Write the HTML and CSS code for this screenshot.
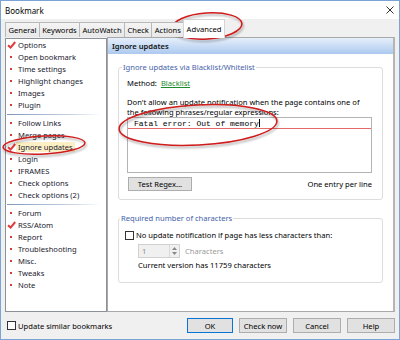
FILE: index.html
```html
<!DOCTYPE html>
<html lang="en">
<head>
    <meta charset="UTF-8">
    <title>Bookmark</title>
    <link rel="stylesheet" href="styles.css">
</head>
<body>
    <div class="window">
        <div class="titlebar">
            <span>Bookmark</span>
            <svg class="close" width="8" height="8" viewBox="0 0 8 8"><path d="M0.5 0.5 L7.5 7.5 M7.5 0.5 L0.5 7.5" stroke="#333" stroke-width="1"/></svg>
        </div>

        <div class="tabs">
            <div class="tab">General</div>
            <div class="tab">Keywords</div>
            <div class="tab">AutoWatch</div>
            <div class="tab">Check</div>
            <div class="tab">Actions</div>
            <div class="tab active">Advanced</div>
        </div>

        <div class="page">
            <ul class="nav">
                <li class="checked">Options</li>
                <li>Open bookmark</li>
                <li>Time settings</li>
                <li>Highlight changes</li>
                <li>Images</li>
                <li>Plugin</li>
                <li class="sep"></li>
                <li>Follow Links</li>
                <li>Merge pages</li>
                <li class="checked selected"><span>Ignore updates</span></li>
                <li>Login</li>
                <li>IFRAMES</li>
                <li>Check options</li>
                <li>Check options (2)</li>
                <li class="sep"></li>
                <li>Forum</li>
                <li class="checked">RSS/Atom</li>
                <li>Report</li>
                <li>Troubleshooting</li>
                <li>Misc.</li>
                <li>Tweaks</li>
                <li>Note</li>
            </ul>

            <div class="content">
                <div class="header">Ignore updates</div>

                <fieldset class="group">
                    <legend>Ignore updates via Blacklist/Whitelist</legend>
                    <div class="method">Method: <a class="link">Blacklist</a></div>
                    <p class="desc">Don't allow an update notification when the page contains one of the following phrases/regular expressions:</p>
                    <div class="textarea">
                        <div class="line">Fatal error: Out of memory<span class="caret"></span></div>
                    </div>
                    <div class="row">
                        <button class="btn small">Test Regex...</button>
                        <span>One entry per line</span>
                    </div>
                </fieldset>

                <fieldset class="group second">
                    <legend>Required number of characters</legend>
                    <label class="check"><span class="box"></span>No update notification if page has less characters than:</label>
                    <div class="spin-row">
                        <div class="spin">
                            <span>1</span>
                            <div class="arrows">
                                <svg width="5" height="3" viewBox="0 0 5 3"><path d="M0 3 L2.5 0 L5 3Z" fill="#888"/></svg>
                                <svg width="5" height="3" viewBox="0 0 5 3"><path d="M0 0 L2.5 3 L5 0Z" fill="#888"/></svg>
                            </div>
                        </div>
                        <span class="muted">Characters</span>
                    </div>
                    <div class="current">Current version has 11759 characters</div>
                </fieldset>
            </div>
        </div>

        <div class="footer">
            <label class="check"><span class="box"></span>Update similar bookmarks</label>
            <div class="buttons">
                <button class="btn default">OK</button>
                <button class="btn">Check now</button>
                <button class="btn">Cancel</button>
                <button class="btn">Help</button>
            </div>
        </div>

        <!-- red annotation rings drawn over the dialog -->
        <svg class="marks" width="400" height="340" viewBox="0 0 400 340">
            <defs>
                <filter id="shadow" x="-20%" y="-50%" width="140%" height="200%">
                    <feDropShadow dx="1" dy="2" stdDeviation="1.2" flood-color="#000" flood-opacity="0.35"/>
                </filter>
            </defs>
            <g fill="none" stroke="#cf1a1a" stroke-width="1.5" filter="url(#shadow)">
                <ellipse cx="207" cy="26" rx="35" ry="13" transform="rotate(-4 207 26)"/>
                <ellipse cx="44" cy="145" rx="41" ry="9" transform="rotate(-3 44 145)"/>
                <ellipse cx="198" cy="125" rx="79" ry="20" transform="rotate(-3 198 125)"/>
            </g>
        </svg>
    </div>
</body>
</html>
```

FILE: styles.css
```css
* {
    box-sizing: border-box;
}
body {
    margin: 0;
    font-family: "Noto Sans", "Open Sans", sans-serif;
    font-size: 7.6px;
    color: #000;
}
.window {
    position: relative;
    width: 400px;
    height: 340px;
    border: 1px solid #7aa4d6;
    background: #f0f0f0;
    display: flex;
    flex-direction: column;
}
.titlebar {
    height: 18px;
    background: #fff;
    display: flex;
    align-items: center;
    justify-content: space-between;
    padding: 0 5px 0 4px;
    font-size: 8px;
}

/* tabs */
.tabs {
    height: 18px;
    display: flex;
    align-items: flex-end;
    padding-left: 4px;
    position: relative;
    z-index: 1;
}
.tab {
    height: 15px;
    line-height: 14px;
    padding: 0 2.4px;
    margin-right: -1px;
    border: 1px solid #b9b9b9;
    border-bottom: none;
    background: linear-gradient(#f4f4f4, #e8e8e8);
}
.tab.active {
    height: 19px;
    line-height: 18px;
    margin-bottom: -1px;
    background: #fff;
    border-color: #d4d4d4;
}

/* page */
.page {
    display: flex;
    height: 275px;
    margin-left: 4px;
    width: 390px;
}
.nav {
    list-style: none;
    margin: 1px 0 0 0;
    padding: 0;
    width: 102px;
    background: #fff;
    border: 1px solid #8c9099;
}
.nav li {
    height: 12px;
    line-height: 12px;
    padding-left: 12px;
    position: relative;
    color: #1a1a2e;
}
.nav li::before {
    content: "";
    position: absolute;
    left: 4px;
    top: 5px;
    width: 2px;
    height: 2px;
    background: #d23a3a;
}
.nav li.checked::before {
    left: 1px;
    top: 2px;
    width: 9px;
    height: 8px;
    background: url("data:image/svg+xml,%3Csvg xmlns='http://www.w3.org/2000/svg' width='9' height='8'%3E%3Cpath d='M1 4.2 L3.6 6.6 L8.2 1' fill='none' stroke='%23e23b3b' stroke-width='2'/%3E%3C/svg%3E");
}
.nav li.sep {
    height: 6px;
}
.nav li.sep::before {
    left: 1px;
    top: 3px;
    width: 94px;
    height: 1px;
    background: linear-gradient(to right, #7f97bb, #c9d4e4 70%, rgba(255,255,255,0));
}
.nav li.selected span {
    background: #fcefc4;
    padding: 0 2px;
    margin-left: -2px;
}

.content {
    flex: 1;
    background: #fff;
    border: 1px solid #a8a8a8;
    border-right: 2px solid #b5b5b5;
}
.header {
    height: 16px;
    line-height: 16px;
    padding-left: 4px;
    font-weight: 600;
    background: linear-gradient(#e6effb, #adc9ef);
    color: #111;
}

/* group boxes */
.group {
    margin: 8px 10px 0 10px;
    padding: 4px 10px 8px 8px;
    border: 1px solid #dcdcdc;
    border-radius: 3px;
}
.group legend {
    padding: 0 1px;
    margin-left: -5px;
    color: #3f62a8;
    line-height: 11px;
}
.group.second {
    margin-top: 13px;
    padding: 5px 10px 11px 6px;
}
.method {
    line-height: 12px;
}
.link {
    color: #1d8a2c;
    text-decoration: underline;
    margin-left: 2px;
}
.desc {
    margin: 8px 0 0 0;
    line-height: 10px;
}
.textarea {
    height: 56px;
    background: #fff;
    border: 1px solid #b4b4b4;
    font-family: "Liberation Mono", monospace;
    font-size: 8px;
    padding-top: 1px;
}
.textarea .line {
    padding-left: 6px;
    height: 10px;
    line-height: 9px;
    border-bottom: 1px solid #e46a6a;
}
.caret {
    display: inline-block;
    width: 1px;
    height: 8px;
    background: #000;
    vertical-align: -1px;
}
.row {
    margin-top: 4px;
    display: flex;
    align-items: center;
    justify-content: space-between;
}
.btn {
    font-family: inherit;
    font-size: 7.6px;
    height: 15px;
    padding: 0;
    background: #e1e1e1;
    border: 1px solid #adadad;
    color: #000;
}
.btn.small {
    width: 64px;
    height: 14px;
    margin-left: 1px;
}
.check {
    display: flex;
    align-items: center;
    line-height: 12px;
}
.box {
    width: 9px;
    height: 9px;
    border: 1px solid #333;
    background: #fff;
    margin-right: 2px;
}
.spin-row {
    display: flex;
    align-items: center;
    margin: 3px 0 0 13px;
}
.spin {
    width: 42px;
    height: 14px;
    border: 1px solid #d0d0d0;
    background: #f0f0f0;
    display: flex;
    align-items: center;
    justify-content: space-between;
    padding-left: 3px;
    color: #8a8a8a;
}
.arrows {
    width: 10px;
    height: 12px;
    border-left: 1px solid #dadada;
    display: flex;
    flex-direction: column;
    align-items: center;
    justify-content: center;
    gap: 2px;
}
.arrows svg {
    display: block;
}
.muted {
    color: #9a9a9a;
    margin-left: 5px;
}
.current {
    margin: 1px 0 0 13px;
    line-height: 12px;
}

/* footer */
.footer {
    flex: 1;
    display: flex;
    align-items: center;
    justify-content: space-between;
    padding: 0 4px 0 6px;
}
.buttons {
    display: flex;
    gap: 6px;
}
.buttons .btn {
    width: 48px;
}
.buttons .btn.default {
    width: 46px;
    border-color: #0a74d6;
}

.marks {
    position: absolute;
    left: -1px;
    top: -1px;
    pointer-events: none;
}
```
